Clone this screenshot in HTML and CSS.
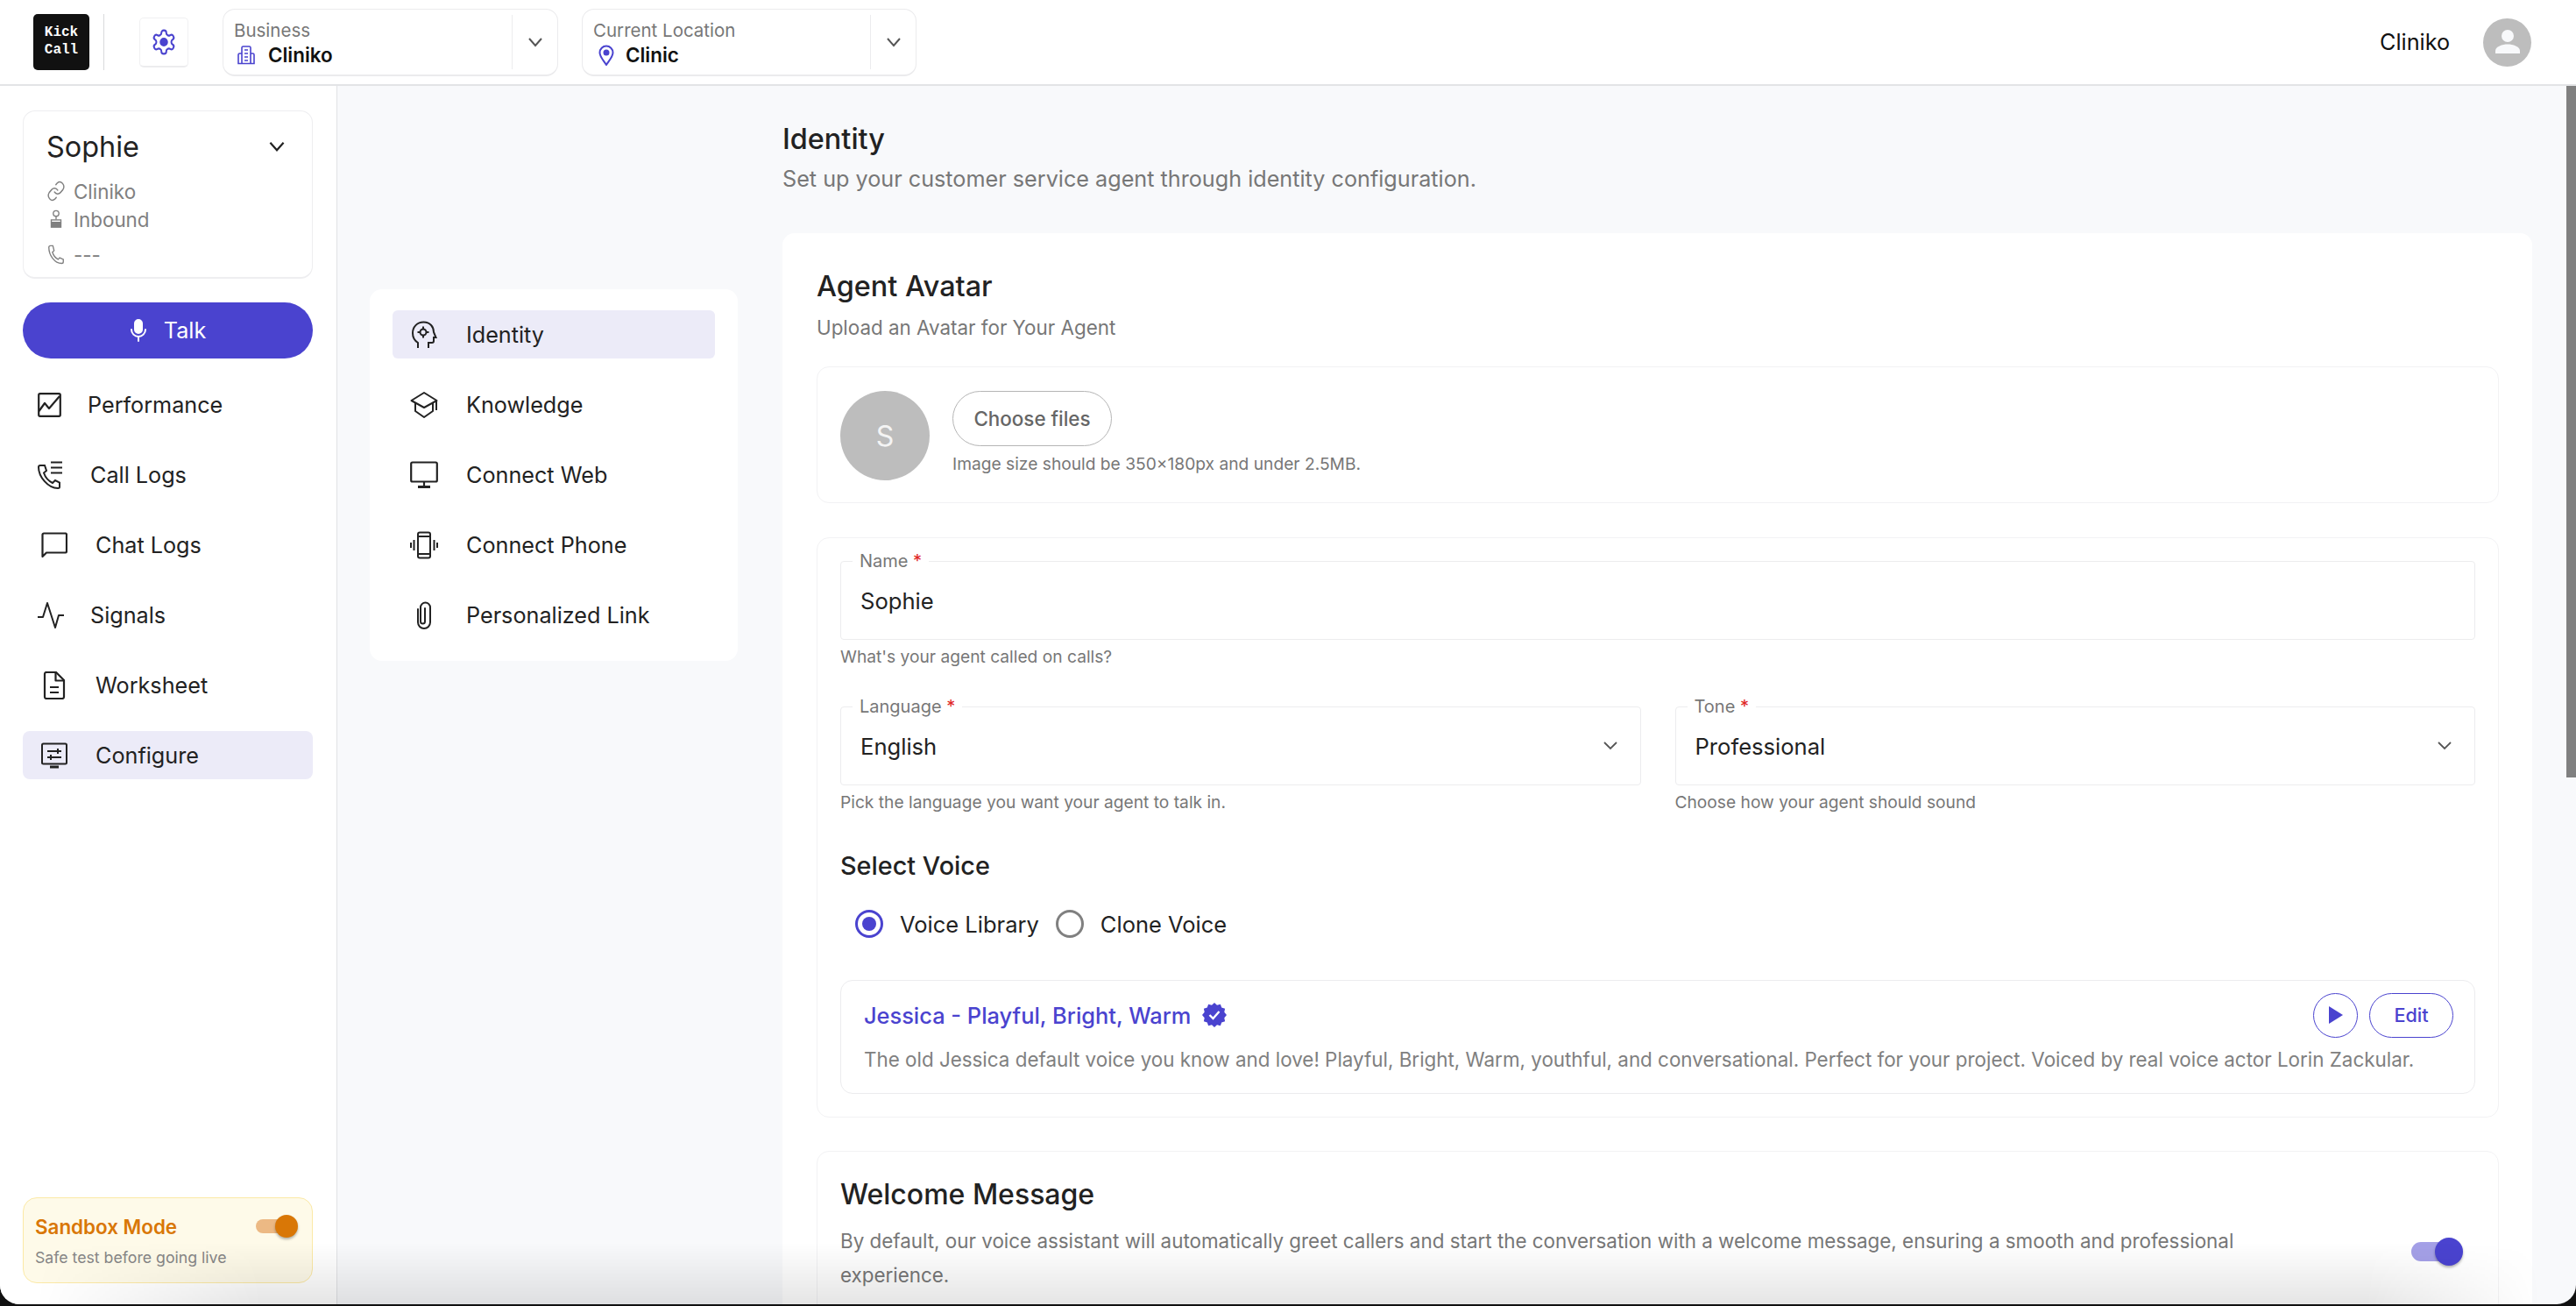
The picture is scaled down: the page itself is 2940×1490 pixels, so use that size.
FILE: index.html
```html
<!DOCTYPE html>
<html lang="en">
  <head>
    <meta charset="UTF-8" />
    <meta name="viewport" content="width=device-width, initial-scale=1.0" />
    <title>Identity | KickCall</title>
    <link rel="stylesheet" href="styles.css">
  </head>
  <body>
    <div class="app">
      <header class="topbar">
        <div class="logo">Kick<br />Call</div>
        <span class="topbar-divider"></span>
        <button class="gear-btn">
          <svg width="30" height="32" viewBox="0 0 24 24" preserveAspectRatio="none" fill="none" stroke="#4a43cf" stroke-width="1.6" stroke-linejoin="round"><path d="M12.22 2h-.44a2 2 0 0 0-2 2v.18a2 2 0 0 1-1 1.73l-.43.25a2 2 0 0 1-2 0l-.15-.08a2 2 0 0 0-2.73.73l-.22.38a2 2 0 0 0 .73 2.73l.15.1a2 2 0 0 1 1 1.72v.51a2 2 0 0 1-1 1.74l-.15.09a2 2 0 0 0-.73 2.73l.22.38a2 2 0 0 0 2.73.73l.15-.08a2 2 0 0 1 2 0l.43.25a2 2 0 0 1 1 1.73V20a2 2 0 0 0 2 2h.44a2 2 0 0 0 2-2v-.18a2 2 0 0 1 1-1.73l.43-.25a2 2 0 0 1 2 0l.15.08a2 2 0 0 0 2.73-.73l.22-.39a2 2 0 0 0-.73-2.73l-.15-.08a2 2 0 0 1-1-1.74v-.5a2 2 0 0 1 1-1.74l.15-.09a2 2 0 0 0 .73-2.73l-.22-.38a2 2 0 0 0-2.73-.73l-.15.08a2 2 0 0 1-2 0l-.43-.25a2 2 0 0 1-1-1.73V4a2 2 0 0 0-2-2z"/><circle cx="12" cy="12" r="3" fill="#4a43cf"/></svg>
        </button>
        <div class="picker">
          <div class="picker-body">
            <span class="picker-label">Business</span>
            <span class="picker-value">
              <svg width="22" height="22" viewBox="0 0 22 22" fill="none" stroke="#4a43cf" stroke-width="1.6"><path d="M6 20.500V2.500A1.500 1.500 0 0 1 7.500 1h7A1.500 1.500 0 0 1 16 2.500v18"/><path d="M6 9H3.500A1.500 1.500 0 0 0 2 10.500v10h18v-10A1.500 1.500 0 0 0 18.500 9H16"/><path d="M9 5h4M9 9h4M9 13h4M9 17h4"/></svg>
              Cliniko
            </span>
          </div>
          <div class="picker-arrow">
            <svg class="chevron" width="24" height="24" viewBox="0 0 24 24" fill="none" stroke="#555" stroke-width="2"><polyline points="5 8 12 16 19 8"/></svg>
          </div>
        </div>
        <div class="picker picker-location">
          <div class="picker-body">
            <span class="picker-label">Current Location</span>
            <span class="picker-value picker-value-pin">
              <svg width="20" height="24" viewBox="0 0 20 24" fill="none" stroke="#4a43cf" stroke-width="2"><path d="M10 23C6 17 2.500 13.500 2.500 9a7.500 7.500 0 0 1 15 0c0 4.500-3.500 8-7.500 14z"/><circle cx="10" cy="9" r="2.500" fill="#4a43cf"/></svg>
              Clinic
            </span>
          </div>
          <div class="picker-arrow">
            <svg class="chevron" width="24" height="24" viewBox="0 0 24 24" fill="none" stroke="#555" stroke-width="2"><polyline points="5 8 12 16 19 8"/></svg>
          </div>
        </div>
        <div class="account">
          <span class="account-name">Cliniko</span>
          <div class="account-avatar">
            <svg width="30" height="30" viewBox="0 0 30 30" fill="#f8f9fb"><circle cx="15" cy="8" r="7"/><path d="M1 28v-3c0-5 8-7.500 14-7.500S29 20 29 25v3z"/></svg>
          </div>
        </div>
      </header>

      <div class="workspace">
        <aside class="sidebar">
          <div class="agent-card">
            <div class="agent-name">
              <span>Sophie</span>
              <svg width="26" height="26" viewBox="0 0 24 24" fill="none" stroke="#222" stroke-width="2"><polyline points="5 8 12 16 19 8"/></svg>
            </div>
            <div class="agent-meta agent-meta-first">
              <svg width="22" height="26" viewBox="0 0 24 24" preserveAspectRatio="none" fill="none" stroke="#808080" stroke-width="1.500" stroke-linecap="round"><path d="M10 13a5 5 0 0 0 7.500.500l3-3a5 5 0 0 0-7-7l-1.700 1.700"/><path d="M14 11a5 5 0 0 0-7.500-.500l-3 3a5 5 0 0 0 7 7l1.700-1.700"/></svg>
              Cliniko
            </div>
            <div class="agent-meta">
              <svg width="22" height="26" viewBox="0 0 24 24" fill="none" stroke="#808080" stroke-width="1.500"><circle cx="12" cy="5" r="3.500"/><path d="M12 8.500v4"/><rect x="6" y="13" width="12" height="3" fill="none"/><rect x="6" y="17" width="12" height="5" fill="#808080"/></svg>
              Inbound
            </div>
            <div class="agent-meta agent-meta-last">
              <svg width="22" height="26" viewBox="0 0 24 24" fill="none" stroke="#808080" stroke-width="1.500"><path d="M5 1.500h3l1.500 6-2 2c1 3.500 3.500 7 7 9l2-2 4.500 2v3c0 1-1 2-2 2C10 23.500 3 13 3 3.500c0-1 1-2 2-2z"/></svg>
              ---
            </div>
          </div>

          <button class="talk-btn">
            <svg width="20" height="26" viewBox="0 0 20 26" fill="none" stroke="#fff" stroke-width="2" stroke-linecap="round"><rect x="6" y="1" width="8" height="15" rx="4" fill="#fff"/><path d="M2 12a8 8 0 0 0 16 0M10 20v5"/></svg>
            Talk
          </button>

          <nav class="side-nav">
            <a class="nav-item">
              <svg width="27" height="28" viewBox="0 0 27 28" fill="none" stroke="#222" stroke-width="2.200" stroke-linejoin="round"><rect x="1.200" y="1.200" width="24.600" height="25.600" rx="1.500"/><polyline points="1.500 21 8 12 13 18 25 4"/></svg>
              Performance
            </a>
            <a class="nav-item">
              <svg width="30" height="32" viewBox="0 0 30 32" fill="none" stroke="#222" stroke-width="2"><path d="M3 5h5l2 6-3 2.500c1.500 4.500 5 9 10 11.500l3-3 5 2.500v5c0 1-1 1.500-2 1.500C12 31 1 18 1 7c0-1 1-2 2-2z"/><path d="M15 1.500h13M15 7.500h13M15 13.500h13"/></svg>
              Call Logs
            </a>
            <a class="nav-item nav-item-wide">
              <svg width="30" height="30" viewBox="0 0 30 30" fill="none" stroke="#222" stroke-width="2.200" stroke-linejoin="round"><path d="M1.500 28V3A1.500 1.500 0 0 1 3 1.500h25A1.500 1.500 0 0 1 29 3v19a1.500 1.500 0 0 1-1.500 1.500H6z"/></svg>
              Chat Logs
            </a>
            <a class="nav-item">
              <svg width="30" height="30" viewBox="0 0 30 30" fill="none" stroke="#222" stroke-width="2" stroke-linejoin="round"><polyline points="0 17 6 17 11 1 20 29 24 15 30 15"/></svg>
              Signals
            </a>
            <a class="nav-item nav-item-wide">
              <svg width="30" height="32" viewBox="0 0 30 32" fill="none" stroke="#222" stroke-width="2.200" stroke-linejoin="round"><path d="M4 3a2 2 0 0 1 2-2h11l9 9v19a2 2 0 0 1-2 2H6a2 2 0 0 1-2-2z"/><path d="M16.500 1v9.500H26M10 18h10M10 24h10"/></svg>
              Worksheet
            </a>
            <a class="nav-item nav-item-wide nav-item-active">
              <svg width="30" height="30" viewBox="0 0 30 30" fill="none" stroke="#222" stroke-width="2"><rect x="1" y="1.500" width="28" height="23" rx="1.500"/><path d="M7 10h16M19 7v6M23 17H7M11 14v6"/><path d="M10 28h10" stroke-width="3"/></svg>
              Configure
            </a>
          </nav>

          <div class="sandbox">
            <div>
              <div class="sandbox-title">Sandbox Mode</div>
              <div class="sandbox-sub">Safe test before going live</div>
            </div>
            <span class="toggle toggle-sandbox"><span class="toggle-knob"></span></span>
          </div>
        </aside>

        <main class="main">
          <nav class="sub-nav">
            <a class="sub-item sub-item-active">
              <svg width="32" height="32" viewBox="0 0 32 32" fill="none" stroke="#222" stroke-width="2"><path d="M9 31v-6c-4-2.500-6-6-6-11C3 7 8 1.500 15.500 1.500S27 7 27 13l2.500 6H27v4a2 2 0 0 1-2 2h-4v6"/><circle cx="15" cy="13" r="3.500"/><path d="M15 6.500v3M15 16.500v3M8.500 13h3M18.500 13h3"/></svg>
              Identity
            </a>
            <a class="sub-item">
              <svg width="32" height="32" viewBox="0 0 32 32" fill="none" stroke="#222" stroke-width="2" stroke-linejoin="round"><path d="M16 2 1.500 11 16 19l14.500-8z"/><path d="M6 14v9l10 7 10-7v-9M30 11v11"/></svg>
              Knowledge
            </a>
            <a class="sub-item">
              <svg width="32" height="32" viewBox="0 0 32 32" fill="none" stroke="#222" stroke-width="2.200"><rect x="1.200" y="1.500" width="29.600" height="22" rx="1.500"/><path d="M16 24v5"/><path d="M9 29.500h14" stroke-width="3"/></svg>
              Connect Web
            </a>
            <a class="sub-item">
              <svg width="32" height="32" viewBox="0 0 32 32" fill="none" stroke="#222" stroke-width="2"><rect x="9" y="1.500" width="14" height="29" rx="2"/><path d="M9 6h14M9 26h14M4.500 10v12M1 13v6M27.500 10v12M31 13v6"/></svg>
              Connect Phone
            </a>
            <a class="sub-item">
              <svg width="32" height="32" viewBox="0 0 32 32" fill="none" stroke="#222" stroke-width="2" stroke-linecap="round"><path d="M9 9v15a7 7 0 0 0 14 0V7a5.500 5.500 0 0 0-11 0v16a2.500 2.500 0 0 0 5 0V8"/></svg>
              Personalized Link
            </a>
          </nav>

          <section class="content">
            <div class="page-head">
              <h1>Identity</h1>
              <p>Set up your customer service agent through identity configuration.</p>
            </div>

            <div class="panel">
              <h2>Agent Avatar</h2>
              <p class="panel-sub">Upload an Avatar for Your Agent</p>
              <div class="box avatar-box">
                <div class="avatar">S</div>
                <div class="avatar-upload">
                  <button class="choose-btn">Choose files</button>
                  <p class="hint">Image size should be 350×180px and under 2.5MB.</p>
                </div>
              </div>

              <div class="box form-box">
                <div class="field">
                  <span class="field-label">Name <i>*</i></span>
                  <span class="field-value">Sophie</span>
                </div>
                <p class="hint field-hint">What's your agent called on calls?</p>

                <div class="field-row">
                  <div>
                    <div class="field">
                      <span class="field-label">Language <i>*</i></span>
                      <span class="field-value">English</span>
                      <svg width="24" height="24" viewBox="0 0 24 24" fill="none" stroke="#555" stroke-width="1.800"><polyline points="5 8 12 15 19 8"/></svg>
                    </div>
                    <p class="hint field-hint">Pick the language you want your agent to talk in.</p>
                  </div>
                  <div>
                    <div class="field">
                      <span class="field-label">Tone <i>*</i></span>
                      <span class="field-value">Professional</span>
                      <svg width="24" height="24" viewBox="0 0 24 24" fill="none" stroke="#555" stroke-width="1.800"><polyline points="5 8 12 15 19 8"/></svg>
                    </div>
                    <p class="hint field-hint">Choose how your agent should sound</p>
                  </div>
                </div>

                <h3>Select Voice</h3>
                <div class="radios">
                  <label class="radio radio-on"><span class="radio-dot"></span>Voice Library</label>
                  <label class="radio"><span class="radio-dot"></span>Clone Voice</label>
                </div>

                <div class="voice-card">
                  <div class="voice-head">
                    <span class="voice-name">Jessica - Playful, Bright, Warm</span>
                    <svg width="28" height="28" viewBox="0 0 28 28"><path fill="#4a43cf" d="M14 0l3 2.800 3.900-1 1.300 3.800 3.900 1.200-.800 4L28 14l-2.700 3.200.800 4-3.900 1.200-1.300 3.800-3.900-1L14 28l-3-2.800-3.900 1-1.300-3.800-3.900-1.200.8-4L0 14l2.700-3.200-.8-4 3.900-1.200 1.300-3.800 3.900 1z"/><polyline points="8.500 14 12.500 18 19.500 10" fill="none" stroke="#fff" stroke-width="2.400"/></svg>
                    <div class="voice-actions">
                      <button class="voice-play"><svg width="18" height="20" viewBox="0 0 18 20"><polygon points="1 0 17 10 1 20" fill="#4a43cf"/></svg></button>
                      <button class="voice-edit">Edit</button>
                    </div>
                  </div>
                  <p class="voice-desc">The old Jessica default voice you know and love! Playful, Bright, Warm, youthful, and conversational. Perfect for your project. Voiced by real voice actor Lorin Zackular.</p>
                </div>
              </div>

              <div class="box welcome-box">
                <h2 class="welcome-title">Welcome Message</h2>
                <div class="welcome-row">
                  <p>By default, our voice assistant will automatically greet callers and start the conversation with a welcome message, ensuring a smooth and professional experience.</p>
                  <span class="toggle"><span class="toggle-knob"></span></span>
                </div>
                <div class="welcome-input"></div>
              </div>
            </div>
          </section>
        </main>
      </div>

      <div class="scroll-thumb"></div>
      <div class="bottom-shade"></div>
    </div>
  </body>
</html>
```

FILE: styles.css
```css
* {
  margin: 0;
  padding: 0;
  box-sizing: border-box;
}

body {
  font-family: Inter, "Liberation Sans", sans-serif;
  background-color: #111;
  color: #222;
  height: 100vh;
  overflow: hidden;
}

button {
  font-family: inherit;
  background: none;
  cursor: pointer;
}

.app {
  position: relative;
  display: flex;
  flex-direction: column;
  height: 1488px;
  background: #f8f9fb;
  border-radius: 0 0 22px 22px;
  overflow: hidden;
}

/* top bar */
.topbar {
  display: flex;
  align-items: center;
  height: 98px;
  flex-shrink: 0;
  padding: 0 51px 0 38px;
  background: #fff;
  border-bottom: 2px solid #e3e4e6;
}

.logo {
  width: 64px;
  height: 64px;
  padding-top: 11px;
  border-radius: 5px;
  background: #111;
  color: #fff;
  font-family: "Liberation Mono", monospace;
  font-size: 16px;
  font-weight: 700;
  line-height: 20px;
  text-align: center;
}

.topbar-divider {
  width: 1px;
  height: 64px;
  margin: 0 40px 0 16px;
  background: #d9dadc;
}

.gear-btn {
  display: flex;
  align-items: center;
  justify-content: center;
  width: 56px;
  height: 57px;
  margin-right: 39px;
  border: 1px solid #f0f0f2;
  border-bottom: 2px solid #ececee;
  border-radius: 5px;
}

.picker {
  display: flex;
  width: 383px;
  height: 77px;
  margin-right: 27px;
  border: 1px solid #ebebed;
  border-bottom-width: 2px;
  border-radius: 14px;
}

.picker-location {
  width: 382px;
}

.picker-body {
  flex: 1;
  display: flex;
  flex-direction: column;
  padding: 8px 0 0 12px;
}

.picker-label {
  font-size: 20.500px;
  line-height: 32px;
  color: #777;
}

.picker-value {
  display: flex;
  align-items: center;
  gap: 14px;
  padding-left: 3px;
  font-size: 22.400px;
  font-weight: 600;
  line-height: 24px;
  color: #111;
}

.picker-value-pin {
  padding-left: 5px;
  gap: 12px;
}

.picker-arrow {
  display: flex;
  align-items: center;
  justify-content: center;
  width: 52px;
  margin: 6px 0;
  border-left: 1px solid #ececee;
}

.account {
  display: flex;
  align-items: center;
  gap: 38px;
  margin-left: auto;
}

.account-name {
  font-size: 25.200px;
  color: #111;
}

.account-avatar {
  display: flex;
  align-items: center;
  justify-content: center;
  width: 55px;
  height: 55px;
  border-radius: 50%;
  background: #bdbdbd;
}

/* left sidebar */
.workspace {
  flex: 1;
  display: flex;
  min-height: 0;
}

.sidebar {
  width: 385px;
  flex-shrink: 0;
  display: flex;
  flex-direction: column;
  padding: 28px 27px 24px 26px;
  background: #fff;
  border-right: 1px solid #e1e2e5;
}

.agent-card {
  height: 192px;
  padding: 18px 27px 18px 26px;
  border: 1px solid #eeeef0;
  border-bottom-width: 2px;
  border-radius: 14px;
}

.agent-name {
  display: flex;
  align-items: center;
  justify-content: space-between;
  height: 44px;
  font-size: 32.400px;
  color: #222;
}

.agent-meta {
  display: flex;
  align-items: center;
  gap: 9px;
  height: 32px;
  font-size: 22.400px;
  color: #808080;
}

.agent-meta-first {
  margin-top: 13px;
}

.agent-meta-last {
  margin-top: 8px;
}

.talk-btn {
  display: flex;
  align-items: center;
  justify-content: center;
  gap: 19px;
  height: 64px;
  margin-top: 27px;
  border: none;
  border-radius: 32px;
  background: #4a43cf;
  color: #fff;
  font-size: 25.200px;
}

.side-nav {
  display: flex;
  flex-direction: column;
  gap: 25px;
  margin-top: 25px;
}

.nav-item {
  display: flex;
  align-items: center;
  gap: 30px;
  height: 55px;
  padding-left: 17px;
  border-radius: 8px;
  font-size: 25.200px;
  color: #222;
}

.nav-item-wide {
  gap: 32px;
  padding-left: 21px;
}

.nav-item-active {
  background: #ecebf8;
}

.sandbox {
  display: flex;
  align-items: flex-start;
  justify-content: space-between;
  height: 98px;
  margin-top: auto;
  padding: 18px 18px 0 13px;
  border: 1px solid #fbe9a6;
  border-radius: 16px;
  background: #fefae9;
}

.sandbox-title {
  font-size: 22.400px;
  font-weight: 600;
  line-height: 30px;
  color: #d97706;
}

.sandbox-sub {
  margin-top: 8px;
  font-size: 17.700px;
  line-height: 24px;
  color: #868686;
}

/* toggle */
.toggle {
  position: relative;
  display: block;
  width: 58px;
  height: 22px;
  flex-shrink: 0;
  border-radius: 11px;
  background: #a4a0e7;
}

.toggle-knob {
  position: absolute;
  top: -5px;
  right: -1px;
  width: 32px;
  height: 32px;
  border-radius: 50%;
  background: #4a43cf;
  box-shadow: 0 2px 3px rgba(0, 0, 0, 0.3);
}

.toggle-sandbox {
  width: 46px;
  height: 16px;
  margin-top: 6px;
  background: #ecb984;
}

.toggle-sandbox .toggle-knob {
  top: -5px;
  right: -2px;
  width: 26px;
  height: 26px;
  background: #d97706;
}

/* main area */
.main {
  flex: 1;
  display: flex;
  gap: 51px;
  min-width: 0;
  padding: 0 50px 0 37px;
  overflow: hidden;
}

.sub-nav {
  width: 420px;
  height: 424px;
  flex-shrink: 0;
  display: flex;
  flex-direction: column;
  gap: 25px;
  margin-top: 232px;
  padding: 24px 26px;
  border-radius: 14px;
  background: #fff;
}

.sub-item {
  display: flex;
  align-items: center;
  gap: 32px;
  height: 55px;
  padding-left: 20px;
  border-radius: 6px;
  font-size: 25.200px;
  color: #222;
}

.sub-item-active {
  background: #ecebf8;
}

.content {
  flex: 1;
  min-width: 0;
}

.page-head {
  height: 168px;
  padding-top: 40px;
}

.page-head h1 {
  font-size: 32.400px;
  font-weight: 500;
  line-height: 42px;
  color: #222;
}

.page-head p {
  margin-top: 7px;
  font-size: 25.200px;
  line-height: 34px;
  color: #777;
}

.panel {
  padding: 40px 38px 0 39px;
  border-radius: 14px 14px 0 0;
  background: #fff;
}

.panel h2 {
  font-size: 32.400px;
  font-weight: 500;
  line-height: 42px;
  color: #222;
}

.panel-sub {
  margin-top: 9px;
  font-size: 22.400px;
  line-height: 34px;
  color: #777;
}

.box {
  border: 1px solid #f2f2f4;
  border-radius: 14px;
}

.avatar-box {
  display: flex;
  gap: 26px;
  height: 156px;
  margin-top: 27px;
  padding: 27px 26px;
}

.avatar {
  display: flex;
  align-items: center;
  justify-content: center;
  width: 102px;
  height: 102px;
  border-radius: 50%;
  background: #bdbdbd;
  color: #f4f4f4;
  font-size: 32px;
}

.choose-btn {
  display: block;
  width: 182px;
  height: 63px;
  border: 1px solid #b5b5b5;
  border-radius: 32px;
  color: #666;
  font-size: 22.400px;
  font-weight: 500;
}

.hint {
  font-size: 19.200px;
  line-height: 26px;
  color: #777;
}

.avatar-upload .hint {
  margin-top: 7px;
}

.form-box {
  height: 662px;
  margin-top: 39px;
  padding: 26px 26px 0;
}

.field {
  position: relative;
  display: flex;
  align-items: center;
  justify-content: space-between;
  height: 90px;
  padding: 0 22px;
  border: 1px solid #ececee;
  border-radius: 4px;
}

.field-label {
  position: absolute;
  top: -13px;
  left: 13px;
  padding: 0 8px;
  background: #fff;
  font-size: 20px;
  line-height: 24px;
  color: #777;
}

.field-label i {
  font-style: normal;
  color: #e02424;
}

.field-value {
  font-size: 25.600px;
  color: #222;
}

.field-hint {
  margin-top: 6px;
}

.field-row {
  display: grid;
  grid-template-columns: 1fr 1fr;
  gap: 39px;
  margin-top: 44px;
}

.form-box h3 {
  margin-top: 40px;
  font-size: 28.800px;
  font-weight: 500;
  line-height: 40px;
  color: #222;
}

.radios {
  display: flex;
  gap: 19px;
  margin-top: 26px;
  padding-left: 17px;
}

.radio {
  display: flex;
  align-items: center;
  gap: 19px;
  height: 40px;
  font-size: 25.500px;
  color: #222;
}

.radio-dot {
  display: flex;
  align-items: center;
  justify-content: center;
  width: 32px;
  height: 32px;
  border: 3px solid #808080;
  border-radius: 50%;
}

.radio-on .radio-dot {
  border-color: #4a43cf;
}

.radio-on .radio-dot::after {
  content: "";
  width: 16px;
  height: 16px;
  border-radius: 50%;
  background: #4a43cf;
}

.voice-card {
  height: 130px;
  margin-top: 44px;
  padding: 13px 24px 0 26px;
  border: 1px solid #ececee;
  border-radius: 14px;
}

.voice-head {
  display: flex;
  align-items: center;
  gap: 13px;
  height: 52px;
}

.voice-name {
  font-size: 25.400px;
  font-weight: 500;
  color: #4a43cf;
}

.voice-actions {
  display: flex;
  gap: 13px;
  margin-left: auto;
}

.voice-play {
  display: flex;
  align-items: center;
  justify-content: center;
  width: 51px;
  height: 51px;
  border: 1px solid #4a43cf;
  border-radius: 50%;
}

.voice-edit {
  width: 96px;
  height: 51px;
  border: 1px solid #4a43cf;
  border-radius: 26px;
  color: #4a43cf;
  font-size: 21.600px;
  font-weight: 500;
}

.voice-desc {
  margin-top: 8px;
  font-size: 22.400px;
  line-height: 34px;
  color: #808080;
}

.welcome-box {
  height: 300px;
  margin-top: 38px;
  padding: 28px 26px 0;
}

.panel .welcome-title {
  font-size: 32px;
  font-weight: 500;
}

.welcome-row {
  display: flex;
  align-items: center;
  justify-content: space-between;
  margin-top: 12px;
}

.welcome-row p {
  width: 1700px;
  font-size: 22.400px;
  line-height: 39px;
  color: #777;
}

.welcome-row .toggle {
  margin-right: 15px;
  margin-top: -14px;
}

.welcome-input {
  height: 90px;
  margin-top: 16px;
  border: 1px solid #dcdcdc;
  border-radius: 14px;
}

/* things drawn over the page */
.scroll-thumb {
  position: absolute;
  top: 98px;
  right: 0;
  width: 11px;
  height: 789px;
  background: #808080;
}

.bottom-shade {
  position: absolute;
  left: 0;
  right: 0;
  bottom: 0;
  height: 70px;
  background: linear-gradient(to bottom, rgba(0, 0, 0, 0), rgba(0, 0, 0, 0.1));
  -webkit-mask-image: linear-gradient(to right, transparent 40px, #000 300px, #000 2700px, transparent 2900px);
  mask-image: linear-gradient(to right, transparent 40px, #000 300px, #000 2700px, transparent 2900px);
  pointer-events: none;
}
```
